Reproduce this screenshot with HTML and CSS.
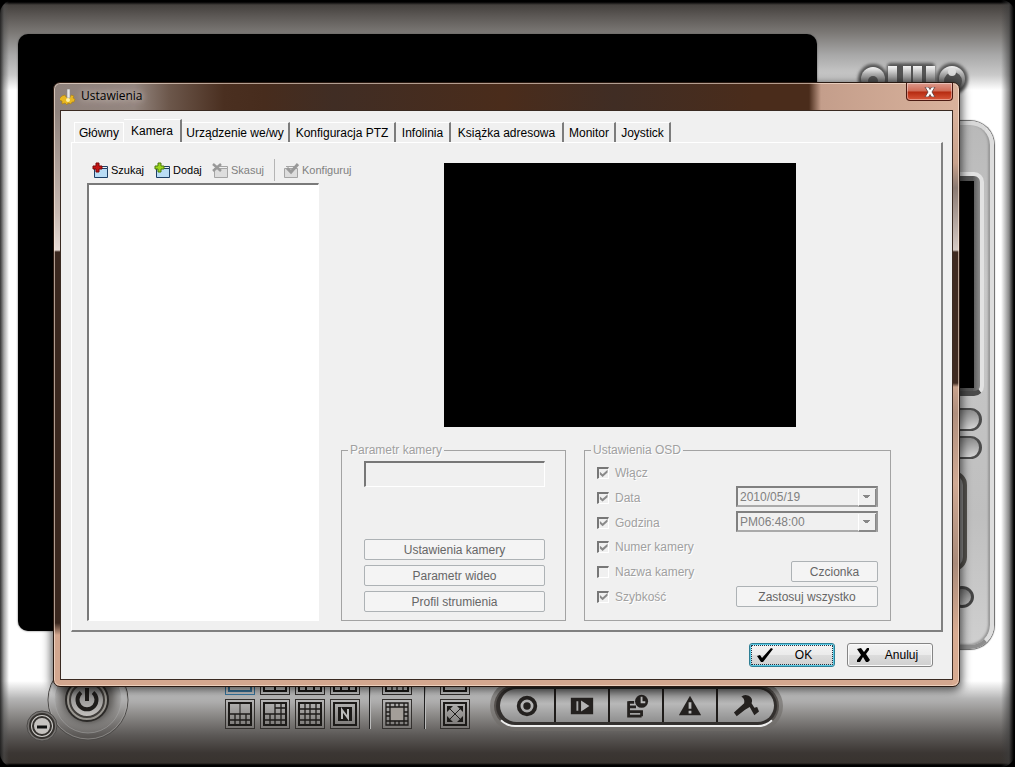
FILE: index.html
```html
<!DOCTYPE html>
<html lang="pl">
<head>
<meta charset="utf-8">
<title>Ustawienia</title>
<link rel="stylesheet" href="styles.css">
</head>
<body>
<main class="device">
  <div class="screen"></div>

  <aside class="side">
    <svg class="logo" viewBox="0 0 116 50" aria-hidden="true">
      <defs>
        <linearGradient id="steel" x1="0" y1="0" x2="0" y2="1"><stop offset="0" stop-color="#f4f4f4"/><stop offset=".3" stop-color="#b0b0b0"/><stop offset="1" stop-color="#444"/></linearGradient>
        <filter id="soft" x="-10%" y="-10%" width="120%" height="120%"><feGaussianBlur stdDeviation="1.5"/></filter>
      </defs>
      <g class="logo-back" filter="url(#soft)"><circle cx="18" cy="17" r="15"/><rect x="32" y="1" width="18" height="36" rx="4"/><rect x="46" y="1" width="34" height="36" rx="4"/><circle cx="97" cy="17" r="16"/></g>
      <circle cx="18" cy="17" r="12" fill="url(#steel)"/><circle cx="18" cy="19" r="5" fill="#555"/>
      <g fill="url(#steel)"><rect x="33" y="4" width="9" height="30"/><rect x="48" y="4" width="8" height="30"/><rect x="58" y="4" width="9" height="30"/><rect x="71" y="4" width="9" height="30"/></g>
      <circle cx="97" cy="17" r="13" fill="url(#steel)"/><circle cx="98" cy="19" r="9" fill="#555"/><circle cx="97" cy="10" r="4" fill="#ddd"/>
    </svg>
    <div class="side-panel">
      <div class="mini-screen"></div>
      <button class="side-key" type="button" aria-label="Zoom +"></button>
      <button class="side-key" type="button" aria-label="Zoom -"></button>
      <div class="side-ring"></div>
      <button class="side-knob" type="button" aria-label="Fokus"></button>
    </div>
  </aside>

  <div class="console">
    <svg class="power" viewBox="0 0 108 88" role="img" aria-label="Zasilanie">
      <defs>
        <radialGradient id="dish"><stop offset=".5" stop-color="#4a4744"/><stop offset=".75" stop-color="#777573"/><stop offset="1" stop-color="#8a8886" stop-opacity=".3"/></radialGradient>
        <linearGradient id="cap" x1="0" y1="0" x2="0" y2="1"><stop offset="0" stop-color="#777"/><stop offset="1" stop-color="#c5c2bf"/></linearGradient>
      </defs>
      <circle cx="66" cy="45" r="40" fill="none" stroke="#4c4a48"/>
      <circle cx="66" cy="45" r="39" fill="none" stroke="#b2b0ae" stroke-opacity=".5"/>
      <circle cx="66" cy="45" r="33" fill="url(#dish)"/>
      <circle cx="66" cy="45" r="33" fill="none" stroke="#aaa" stroke-opacity=".5"/>
      <circle cx="20" cy="71" r="15" fill="#777472" stroke="#4c4a48"/>
      <circle cx="65" cy="45" r="21" fill="#98958f" stroke="#2c2a28" stroke-width="2"/>
      <circle cx="65" cy="45" r="17" fill="url(#cap)" stroke="#403d3a" stroke-width="2"/>
      <path d="M59 37.500a9.500 9.500 0 1 0 12 0" fill="none" stroke="#1f1d1b" stroke-width="4"/>
      <path d="M65 33v13" stroke="#1f1d1b" stroke-width="4"/>
      <circle cx="20" cy="71" r="12" fill="#cfcdca" stroke="#35322f" stroke-width="2"/>
      <circle cx="20" cy="71" r="9" fill="#c6c3c0" stroke="#35322f" stroke-width="2"/>
      <path d="M15 72h10" stroke="#111" stroke-width="3"/>
    </svg>

    <div class="layouts">
      <button class="key key-on" type="button" aria-label="Widok 1"><svg viewBox="0 0 24 24"><path d="M1 1h22v22H1z"/></svg></button>
      <button class="key" type="button" aria-label="Widok 4"><svg viewBox="0 0 24 24"><path d="M1 1h22v22H1zM12 1v22M1 16h22"/></svg></button>
      <button class="key" type="button" aria-label="Widok 6"><svg viewBox="0 0 24 24"><path d="M1 1h22v22H1zM16 1v22M1 16h22M8 16v7M16 8h7"/></svg></button>
      <button class="key" type="button" aria-label="Widok 9"><svg viewBox="0 0 24 24"><path d="M1 1h22v22H1zM8 1v22M16 1v22M1 8h22M1 16h22"/></svg></button>
      <button class="key" type="button" aria-label="Widok 10"><svg viewBox="0 0 24 24"><path d="M1 1h22v22H1z"/><path class="mid" d="M1 12h22M1 18h22M7 12v11M12 12v11M18 12v11"/><path class="thin" d="M12 1v11"/></svg></button>
      <button class="key" type="button" aria-label="Widok 13"><svg viewBox="0 0 24 24"><path d="M1 1h22v22H1z"/><path class="mid" d="M1 12h22M1 18h22M7 12v11M12 1v22M18 1v22M12 6h11"/></svg></button>
      <button class="key" type="button" aria-label="Widok 16"><svg viewBox="0 0 24 24"><path d="M1 1h22v22H1z"/><path class="mid" d="M1 7h22M1 12h22M1 18h22M7 1v22M12 1v22M18 1v22"/></svg></button>
      <button class="key" type="button" aria-label="Widok N"><svg viewBox="0 0 24 24"><path d="M1 1h22v22H1z"/><path d="M6 6h12v12H6z" fill="#1c1a18"/><path class="light" d="M9 17V8l6 8V7"/></svg></button>
    </div>
    <div class="divider"></div>
    <div class="layouts single">
      <button class="key" type="button" aria-label="Panorama"><svg viewBox="0 0 24 24"><path d="M1 1h22v22H1z"/><path class="mid" d="M1 7h22M1 12h22M1 18h22M7 1v22M12 1v22M18 1v22"/></svg></button>
      <button class="key" type="button" aria-label="Ramka"><svg viewBox="0 0 24 24"><path class="mid" d="M1 1h22v22H1zM5 5h14v14H5zM5 1v22M10 1v4M14 1v4M19 1v22M1 5h22M1 10h4M1 14h4M1 19h22M19 10h4M19 14h4M10 19v4M14 19v4"/><path class="fill" d="M6 6h12v12H6z"/></svg></button>
    </div>
    <div class="divider"></div>
    <div class="layouts single">
      <button class="key" type="button" aria-label="Obrót"><svg viewBox="0 0 24 24"><path d="M1 1h22v22H1z"/><path class="dark" d="M5 14q7 9 14 2l-2-6-5 5z"/></svg></button>
      <button class="key" type="button" aria-label="Pełny ekran"><svg viewBox="0 0 24 24"><path d="M1 1h22v22H1z"/><path class="thin" d="M6 6l12 12M18 6L6 18"/><path class="dark" d="M4 4h6l-6 6zM20 4h-6l6 6zM4 20h6l-6-6zM20 20h-6l6-6z"/></svg></button>
    </div>

    <nav class="pill" aria-label="Funkcje">
      <button type="button" aria-label="Nagrywanie"><svg viewBox="0 0 28 28"><circle cx="14" cy="14" r="9" fill="none" stroke="#24211f" stroke-width="4"/><circle cx="14" cy="14" r="4" fill="#24211f"/></svg></button>
      <button type="button" aria-label="Odtwarzanie"><svg viewBox="0 0 28 28"><path d="M2 5h24v18H2z" fill="#24211f"/><path d="M9 9v10" stroke="#aaa" stroke-width="2"/><path d="M13 8v12l9-6z" fill="#b4b4b4"/></svg></button>
      <button type="button" aria-label="Harmonogram"><svg viewBox="0 0 28 28"><path d="M6 9v16h14M6 10h6M6 15h8M6 20h14v5" fill="none" stroke="#24211f" stroke-width="3"/><circle cx="20" cy="9" r="7" fill="#24211f"/><path d="M20 4v6h4" fill="none" stroke="#bbb" stroke-width="2"/></svg></button>
      <button type="button" aria-label="Alarm"><svg viewBox="0 0 28 28"><path d="M14 3l12 21H2z" fill="#24211f"/><path d="M14 10v7M14 19v3" stroke="#bbb" stroke-width="3"/></svg></button>
      <button type="button" aria-label="Konfiguracja"><svg viewBox="0 0 28 28"><path d="M1 21l3 4 9-7 5-3 5 9 5-4-2-5-3 1-3-5q2-5-3-8-5-2-8 1 4 2 3 7z" fill="#24211f"/></svg></button>
    </nav>
  </div>
</main>

<section class="dialog" role="dialog" aria-labelledby="dlg-title">
  <header class="titlebar">
    <svg class="gear" viewBox="0 0 16 16" aria-hidden="true"><path d="M2 7l3-1 1 2h4l1-2 3 1-1 2 2 1-1 3-2 0-1 2-3-1-1 2-2-2-3 1 0-3-3-1 1-2z" fill="#e9b721" stroke="#a97d12" stroke-width=".6"/><path d="M7 0h3v9H7z" fill="#e8e8e8" stroke="#8a8a8a" stroke-width=".6"/><circle cx="8" cy="11" r="2" fill="#fff3a8"/></svg>
    <h1 id="dlg-title">Ustawienia</h1>
    <button class="close" type="button" aria-label="Zamknij"><svg viewBox="0 0 12 10"><path d="M1 0h3.500L6 2.500 7.500 0H11L8 5l3 5H7.500L6 7.500 4.500 10H1l3-5z" fill="#fff" stroke="#5a3a3a" stroke-width=".8"/></svg></button>
  </header>

  <div class="client">
    <div class="tabs" role="tablist">
      <button class="tab" role="tab" type="button">Główny</button>
      <button class="tab active" role="tab" type="button" aria-selected="true">Kamera</button>
      <button class="tab" role="tab" type="button">Urządzenie we/wy</button>
      <button class="tab" role="tab" type="button">Konfiguracja PTZ</button>
      <button class="tab" role="tab" type="button">Infolinia</button>
      <button class="tab" role="tab" type="button">Książka adresowa</button>
      <button class="tab" role="tab" type="button">Monitor</button>
      <button class="tab" role="tab" type="button">Joystick</button>
    </div>

    <div class="page" role="tabpanel">
      <div class="cameras">
        <div class="toolbar">
          <button class="tool" type="button"><svg viewBox="0 0 16 16"><path d="M2.500 6.500h13v9h-13z" fill="#b9dcf5" stroke="#1d3f66"/><path d="M8 4.500h7.500v2" fill="none" stroke="#1d3f66"/><path d="M4 1h3v3h3v3H7v3H4V7H1V4h3z" fill="#c41414" stroke="#7a0808"/></svg>Szukaj</button>
          <button class="tool" type="button"><svg viewBox="0 0 16 16"><path d="M2.500 6.500h13v9h-13z" fill="#b9dcf5" stroke="#1d3f66"/><path d="M8 4.500h7.500v2" fill="none" stroke="#1d3f66"/><path d="M4 1h3v3h3v3H7v3H4V7H1V4h3z" fill="#9ad61c" stroke="#4c7a0b"/></svg>Dodaj</button>
          <button class="tool" type="button" disabled><svg viewBox="0 0 16 16"><path d="M2.500 6.500h13v9h-13z" fill="#ddd" stroke="#a5a5a5"/><path d="M8 4.500h7.500v2" fill="none" stroke="#a5a5a5"/><path d="M1 2l8 7M9 2L1 9" stroke="#999" stroke-width="2.500"/></svg>Skasuj</button>
          <span class="tool-sep"></span>
          <button class="tool" type="button" disabled><svg viewBox="0 0 16 16"><path d="M1.500 6.500h13v9h-13z" fill="#ddd" stroke="#a5a5a5"/><path d="M3 4.500h8" stroke="#a5a5a5"/><path d="M4 6l4 4 7-8" fill="none" stroke="#999" stroke-width="3"/></svg>Konfiguruj</button>
        </div>
        <div class="camera-list" role="listbox" aria-label="Kamery"></div>
      </div>

      <div class="details">
        <div class="preview"></div>
        <div class="groups">
          <fieldset class="group params" disabled>
            <legend>Parametr kamery</legend>
            <input class="param-text" type="text" aria-label="Parametr kamery">
            <div class="param-buttons">
              <button class="btn" type="button">Ustawienia kamery</button>
              <button class="btn" type="button">Parametr wideo</button>
              <button class="btn" type="button">Profil strumienia</button>
            </div>
          </fieldset>

          <fieldset class="group osd" disabled>
            <legend>Ustawienia OSD</legend>
            <div class="checks">
              <label><input type="checkbox" checked>Włącz</label>
              <label><input type="checkbox" checked>Data</label>
              <label><input type="checkbox" checked>Godzina</label>
              <label><input type="checkbox" checked>Numer kamery</label>
              <label><input type="checkbox">Nazwa kamery</label>
              <label><input type="checkbox" checked>Szybkość</label>
            </div>
            <div class="formats">
              <div class="combo"><select aria-label="Format daty"><option>2010/05/19</option></select></div>
              <div class="combo"><select aria-label="Format godziny"><option>PM06:48:00</option></select></div>
              <button class="btn font-btn" type="button">Czcionka</button>
              <button class="btn" type="button">Zastosuj wszystko</button>
            </div>
          </fieldset>
        </div>
      </div>
    </div>

    <footer class="actions">
      <button class="action default" type="button"><svg viewBox="0 0 16 14"><path d="M0 8l3-1 2 3 9-10 2 1L6 14H4z" fill="#000"/></svg><span>OK</span></button>
      <button class="action" type="button"><svg viewBox="0 0 16 14"><path d="M2 1l4-1 3 4 3-4h2l0 2-3 4 4 6-2 2h-2l-3-5-3 5H2l0-2 4-5z" fill="#000"/></svg><span>Anuluj</span></button>
    </footer>
  </div>
</section>
</body>
</html>
```
FILE: styles.css
```css
* { box-sizing: border-box; }

body {
  margin: 0;
  background: #000;
  font: 12px/14px "Liberation Sans", Arial, sans-serif;
  color: #000;
  position: relative;
}

button, input, select { font: inherit; color: inherit; }
button { padding: 0; border: 0; background: none; }

/* device skin */
.device {
  min-height: 100vh;
  display: grid;
  grid-template-columns: 1fr 198px;
  grid-template-rows: 1fr 136px;
  padding: 34px 0 0 18px;
  border-radius: 14px;
  background:
    linear-gradient(90deg, rgba(30,30,30,.9), rgba(80,80,80,.5) 4px, transparent 9px, transparent calc(100% - 14px), rgba(60,60,60,.6) calc(100% - 6px), #000 calc(100% - 1px)),
    linear-gradient(#000 2px, #45413e 5px, #5c5855 16px, #7c7976 33px, #a8a8a8 55px, #c9c9c9 75px, #fff 90px, #fff calc(100% - 86px), #b4b4b4 calc(100% - 68px), #8c8a88 calc(100% - 52px), #5c5957 calc(100% - 32px), #3b3633 calc(100% - 14px), #38332f calc(100% - 4px), #000 calc(100% - 2px));
}

.screen {
  background: #000;
  border-radius: 10px;
  box-shadow: 0 0 2px #555;
}

.side {
  grid-row: 1 / 3;
  grid-column: 2;
  display: flex;
  flex-direction: column;
  align-items: flex-end;
  padding: 28px 21px 118px 0;
}
.logo { width: 116px; height: 50px; margin: 0 23px 9px 0; flex: none; overflow: visible; }
.logo-back { fill: #555; }

.side-panel {
  width: 120px;
  flex: 1;
  display: flex;
  flex-direction: column;
  align-items: flex-end;
  padding: 47px 6px 0 0;
  border: 4px solid #c4c4c4;
  border-color: #d8d8d8 #dedede #8d8d8d #bbb;
  border-radius: 24px;
  background: linear-gradient(#b9b9b9, #c8c8c8 30%, #bfbfbf 75%, #cfcfcf);
  box-shadow: 0 0 1px 1px #666, inset -2px -1px 2px #999;
}
.mini-screen {
  width: 100px;
  height: 224px;
  padding: 5px 6px 3px 4px;
  background: linear-gradient(#000, #000) content-box, linear-gradient(90deg, #555 92%, #8a8a8a);
  border: 4px solid #e2e2e2;
  border-bottom: 5px solid #4a4a4a;
  border-radius: 10px;
}
.side-key {
  width: 60px;
  height: 23px;
  margin: 12px 2px 0 0;
  border: 2px solid #4b4b4b;
  border-right-width: 3px;
  border-radius: 12px;
  background: linear-gradient(#8a8a8a, #d6d6d6);
}
.side-key + .side-key { margin-top: 5px; }
.side-ring {
  width: 60px;
  height: 100px;
  margin: 12px 17px 0 0;
  border: 4px solid #55534f;
  border-radius: 14px;
  background: #8d8d8d;
}
.side-knob {
  width: 24px;
  height: 22px;
  margin: 15px 10px 0 0;
  border: 3px solid #444;
  border-radius: 50%;
  background: linear-gradient(#777, #bbb);
}

.console {
  grid-row: 2;
  grid-column: 1;
  display: flex;
  align-items: flex-start;
  padding: 24px 0 0 4px;
}
.power { width: 108px; height: 88px; flex: none; margin-right: 95px; }
.layouts {
  display: grid;
  grid-template-columns: repeat(4, 30px);
  grid-auto-rows: 30px;
  gap: 4px 5px;
  margin-top: 10px;
}
.layouts.single { grid-template-columns: 30px; }
.key {
  display: grid;
  place-items: center;
  border: 1px solid #33302e;
  background: rgba(255,255,255,.08);
}
.key svg { width: 24px; height: 24px; fill: none; stroke: #1c1a18; stroke-width: 2; }
.key-on { border-color: #3b7da8; }
.key-on svg { stroke: #3b7da8; }
.key .thin { stroke-width: 1; }
.key .mid { stroke-width: 1.3; }
.key .light { stroke: #bbb; }
.key .dark { fill: #1c1a18; stroke: none; }
.key .fill { fill: #a39e99; stroke: none; }
.divider {
  width: 2px;
  height: 64px;
  margin: 10px 11px 0 9px;
  background: #222;
  border-right: 1px solid #bbb;
}
.single + .divider { margin: 10px 14px 0 12px; }

.pill {
  display: grid;
  grid-template-columns: 56px 54px 54px 54px 56px;
  height: 42px;
  margin: 30px 0 0 24px;
  padding: 2px 3px 3px 4px;
  border: 2px solid #55514e;
  border-bottom-color: #eee;
  border-radius: 21px;
  background: #33302e;
  box-shadow: 0 0 0 4px rgba(110,106,104,.6);
  overflow: hidden;
}
.pill button {
  display: grid;
  place-items: center;
  background: linear-gradient(#8a8a8a, #b8b8b8 45%, #8f8f8f);
  border-right: 2px solid #1f1c1a;
}
.pill button:first-child { border-radius: 18px 0 0 18px; }
.pill button:last-child { border-right: 0; border-radius: 0 18px 18px 0; }
.pill svg { width: 26px; height: 26px; }

/* settings window */
.dialog {
  position: absolute;
  top: 82px;
  left: 53px;
  right: 55px;
  padding: 0 6px 6px;
  border: 1px solid #2a1a12;
  border-radius: 7px;
  background:
    linear-gradient(90deg, #8f827c, #94867f 80px, #6c574b 115px, #4a2f20 170px, #472c1d 210px, #402d24 280px, #4a2c1b 450px, #402d24 560px, #4a2c1b 700px, #4a2c1b calc(100% - 150px), #c49e8b calc(100% - 138px), #d9b29c) 0 0 / 100% 28px no-repeat,
    linear-gradient(#8f827c 28px, #c9bab2 130px, #e8dcd6 167px, #3a271e 169px, #3a271e 540px, #d3a78f 552px) 0 0 / 7px 100% no-repeat,
    linear-gradient(#d9b29c 28px, #c9a28c 80px, #8b7a72 105px, #d6cac4 167px, #3f2a20 169px, #3f2a20 300px, #c8a28c 304px, #b08f7d 330px, #d0a993 400px, #a98a79 480px, #d8ab91 550px) 100% 0 / 7px 100% no-repeat,
    #d3a78f;
  box-shadow: inset 0 0 0 1px rgba(255,235,220,.6), 0 2px 10px 2px rgba(0,0,0,.65);
}

.titlebar {
  display: flex;
  align-items: flex-start;
  height: 27px;
}
.gear { width: 16px; height: 16px; margin: 6px 5px 0 0; }
.titlebar h1 {
  margin: 4px 0 0;
  font: 12px/17px "Open Sans", "Noto Sans", sans-serif;
  text-shadow: 0 0 8px #c9bfba, 0 0 6px #c9bfba;
}
.close {
  display: grid;
  place-items: center;
  width: 47px;
  height: 18px;
  margin-left: auto;
  border: 1px solid #4b1a12;
  border-top: 0;
  border-radius: 0 0 4px 4px;
  background: linear-gradient(#dd9a8c, #cf6a55 48%, #b52a10 52%, #d8573a);
  box-shadow: inset 0 0 0 1px rgba(255,255,255,.4);
}
.close svg { width: 12px; height: 10px; }

.client {
  border: 1px solid #3a2a22;
  padding: 8px 9px 11px 10px;
  background: #f0f0f0;
}

.tabs {
  display: grid;
  grid-template-columns: 50px 58px 108px 106px 55px 113px 52px 55px;
  align-items: end;
  height: 23px;
  padding-left: 3px;
}
.tab {
  height: 20px;
  white-space: nowrap;
  border-top: 1px solid #fff;
  border-right: 2px solid #7c7c7c;
}
.tab:first-child { border-left: 1px solid #fff; border-right: 1px solid #fff; }
.tab.active { height: 23px; }

.page {
  display: grid;
  grid-template-columns: 232px 1fr;
  gap: 22px;
  padding: 15px 50px 9px 15px;
  border: 1px solid #fff;
  border-right: 2px solid #808080;
  border-bottom: 2px solid #808080;
}

.cameras { display: flex; flex-direction: column; }
.toolbar {
  display: flex;
  align-items: center;
  height: 23px;
  margin-bottom: 2px;
  padding-left: 5px;
}
.tool {
  display: flex;
  align-items: center;
  gap: 3px;
  min-width: 52px;
  margin-right: 10px;
  font-size: 11px;
  white-space: nowrap;
}
.tool:nth-child(2) { min-width: 48px; }
.tool svg { width: 16px; height: 16px; flex: none; }
.tool:disabled { color: #808080; }
.tool-sep { flex: none; width: 1px; height: 22px; margin-right: 8px; background: #b5b5b5; }
.camera-list {
  flex: 1;
  background: #fff;
  border: 1px solid #fff;
  border-top: 2px solid #7a7a7a;
  border-left: 2px solid #7a7a7a;
}

.details { padding-top: 5px; min-width: 0; }
.preview {
  width: 352px;
  aspect-ratio: 4 / 3;
  margin: 0 95px 16px auto;
  background: #000;
}
.groups {
  display: grid;
  grid-template-columns: 225fr 307fr;
  gap: 18px;
}
.group {
  min-width: 0;
  height: 178px;
  margin: 0;
  padding: 4px 20px 0 22px;
  border: 1px solid #a3a3a3;
}
.group legend {
  margin-left: -16px;
  padding: 0 2px;
  color: #a0a0a0;
  text-shadow: 1px 1px 0 #fff;
}
.osd legend { margin-left: -6px; }

.param-text {
  display: block;
  width: 100%;
  height: 26px;
  margin-bottom: 52px;
  background: #f0f0f0;
  border: 1px solid #fff;
  border-top: 2px solid #777;
  border-left: 2px solid #777;
}
.param-buttons { display: grid; gap: 5px; }

.btn {
  height: 21px;
  border: 1px solid #adb2b5;
  border-radius: 2px;
  background: #f4f4f4;
  color: #666;
}

.osd {
  display: flex;
  justify-content: space-between;
  padding: 4px 12px 0;
}
.checks {
  display: grid;
  grid-template-rows: repeat(6, 1fr);
  height: 148px;
}
.checks label {
  display: flex;
  align-items: center;
  gap: 6px;
  color: #a0a0a0;
  text-shadow: 1px 1px 0 #fff;
}
.checks input {
  appearance: none;
  width: 12px;
  height: 12px;
  margin: 0;
  border: 1px solid #fff;
  border-top: 2px solid #777;
  border-left: 2px solid #777;
}
.checks input:checked::before {
  content: "";
  display: block;
  height: 8px;
  background: #8a8a8a;
  clip-path: polygon(10% 30%, 40% 60%, 95% 5%, 95% 40%, 40% 95%, 10% 65%);
}

.formats {
  display: grid;
  grid-template-columns: 142px;
  align-content: start;
  gap: 4px;
  padding-top: 25px;
}
.combo { position: relative; height: 21px; }
.combo select {
  appearance: none;
  width: 100%;
  height: 21px;
  padding: 0 2px;
  border: 2px solid #808080;
  border-right-color: #999;
  border-bottom-color: #aaa;
  border-radius: 0;
  background: #f0f0f0;
  color: #808080;
  opacity: 1;
}
.combo::after {
  content: "";
  position: absolute;
  top: 3px;
  right: 2px;
  width: 16px;
  height: 16px;
  border-right: 1px solid #888;
  border-bottom: 2px solid #888;
  border-left: 1px solid #fff;
  background: linear-gradient(#888, #888) 4px 6px / 7px 1px no-repeat,
    linear-gradient(#888, #888) 5px 7px / 5px 1px no-repeat,
    linear-gradient(#888, #888) 6px 8px / 3px 1px no-repeat, #f0f0f0;
}
.font-btn { width: 87px; margin-top: 25px; justify-self: end; }

.actions {
  display: flex;
  justify-content: flex-end;
  gap: 12px;
  padding: 11px 10px 1px 0;
}
.action {
  display: flex;
  align-items: center;
  width: 86px;
  height: 24px;
  padding: 0 8px 0 7px;
  border: 1px solid #858585;
  border-radius: 3px;
  background: linear-gradient(#f4f4f4, #ebebeb 48%, #dcdcdc 52%, #d0d0d0);
  box-shadow: inset 0 0 0 1px #fafafa;
}
.action svg { width: 16px; height: 14px; }
.action span { flex: 1; text-align: center; padding-left: 8px; }
.action.default {
  border-color: #2f7f95;
  box-shadow: inset 0 0 0 1px #59cbe6;
  outline: 1px dotted #234;
  outline-offset: -3px;
}
```
